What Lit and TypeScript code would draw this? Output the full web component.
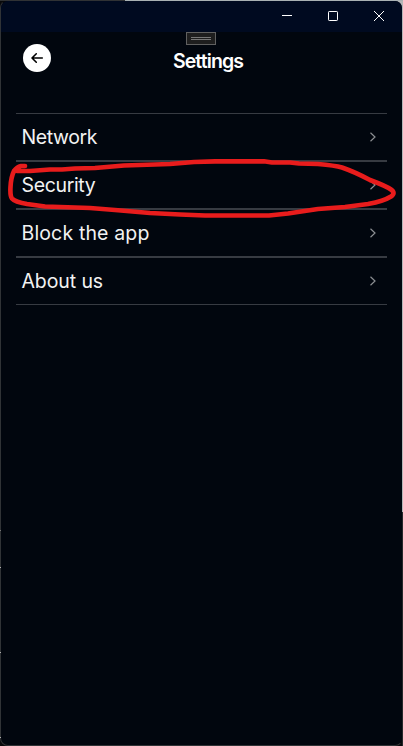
import { LitElement, html, css, svg } from "lit";
import { customElement, property } from "lit/decorators.js";

@customElement("settings-row")
class SettingsRow extends LitElement {
  @property() label = "";
  @property({ type: Number }) tracking = 0;
  static styles = css`
    :host { display: flex; align-items: center; justify-content: space-between; box-sizing: border-box; height: 48px; padding: 0 10px 0 5.5px; border-top: 1px solid #373b42; border-bottom: 1px solid #373b42; }
    .label { font: 400 19.5px/24px Inter, sans-serif; color: #f2f2f2; white-space: nowrap; }
    svg { display: block; }
  `;
  render() {
    return html`<span class="label" style="letter-spacing:${this.tracking}px">${this.label}</span>
      <svg width="8" height="10" viewBox="0 0 8 10"><path d="M1.500 .8 6 5 1.500 9.200" fill="none" stroke="#8b8e92" stroke-width="1.2"/></svg>`;
  }
}

const rows: [string, number][] = [
  ["Network", -0.4],
  ["Security", -0.35],
  ["Block the app", 0.15],
  ["About us", -0.1],
];

@customElement("app-root")
class AppRoot extends LitElement {
  static styles = css`
    :host { display: block; position: relative; width: 403px; height: 746px; overflow: hidden; background: linear-gradient(90deg, #303234 125px, #a9b1b3 125px) 0 0 / 100% 1px no-repeat, linear-gradient(#b4b6b8 512px, #26282b 512px) 100% 0 / 1px 100% no-repeat, linear-gradient(#b4b6b8, #b4b6b8) 100% 0 / 9px 9px no-repeat, #08090b; }
    .window { box-sizing: border-box; width: 403px; height: 746px; border: 1px solid #303336; border-top-color: transparent; border-right-color: transparent; border-radius: 8px; background: #01060e; background-clip: padding-box; overflow: hidden; display: flex; flex-direction: column; }
    .titlebar { height: 31px; flex: none; background: #000a20; display: flex; justify-content: flex-end; }
    .titlebar svg { display: block; }
    .header { height: 81px; flex: none; display: grid; grid-template-columns: 1fr auto 1fr; padding: 0 22px; box-sizing: border-box; }
    .back { width: 28px; height: 28px; margin-top: 12px; border-radius: 50%; background: #fff; }
    .back svg { display: block; }
    .title { margin: 17px 0 0 13px; font: 600 19.5px/24px Inter, sans-serif; letter-spacing: -0.9px; color: #fff; }
    .list { margin: 0 15px; width: 371px; }
    .tool { position: absolute; left: 186px; top: 32px; }
    .marker { position: absolute; left: 0; top: 0; }
    .ticks { position: absolute; left: 0; top: 0; }
  `;
  render() {
    return html`
      <div class="window">
        <div class="titlebar">
          <svg width="138" height="31" viewBox="264 1 138 31" fill="none" stroke="#fff">
            <path d="M282 15.5h10"/><rect x="328.5" y="11.5" width="9" height="9" rx=".7"/><path d="m374 11 10 10m0-10-10 10"/>
          </svg>
        </div>
        <div class="header">
          <div class="back"><svg width="28" height="28" viewBox="0 0 28 28" fill="none" stroke="#000" stroke-width="1.6" stroke-linecap="round" stroke-linejoin="round"><path d="M19.3 14H9.3M13.3 9.8 9 14l4.3 4.2"/></svg></div>
          <div class="title">Settings</div>
          <span></span>
        </div>
        <div class="list">${rows.map(([l, t]) => html`<settings-row .label=${l} .tracking=${t}></settings-row>`)}</div>
      </div>
      <svg class="tool" width="30" height="13"><rect x=".5" y=".5" width="29" height="12" fill="#1e1e1e" stroke="#606060"/><path d="M5 5.5h20M5 7.5h20" stroke="#777"/></svg>
      <svg class="ticks" width="1" height="746">${[567, 652, 737].map((y) => svg`<rect x="0" y=${y} width="1" height="1" fill="#b0b0b0"/>`)}<rect y="530" width="1" height="1" fill="#777"/></svg>
      <svg class="marker" width="403" height="746" fill="none" stroke="#e81c1c" stroke-width="4.7" stroke-linecap="round" stroke-linejoin="round">
        <path d="M25 166 L21 166 Q17 167 14 171 Q11 177 10.500 187 Q10 196 12 198.500 Q15 202 27 204 L45 206.500 L90 208 L115 210 L150 213 L180 214.500 L205 215.500 L269 215.500 L288 213.500 L318 209 L345 207 L368 204 Q384 201 391 196.500 Q396 193 391 189.500 Q386 186 370 180 Q355 172 342 167.500 Q335 165.500 318 164 L299 163.500 L290 162.500 L272 162.500 L264 161.300 L215 161.300 L194 162 L170 164 L155 164.500 L124 165.500 L95 168 L75 168.500 L62 169.500 L50 169.500 L30 171 L17 171"/>
      </svg>`;
  }
}
